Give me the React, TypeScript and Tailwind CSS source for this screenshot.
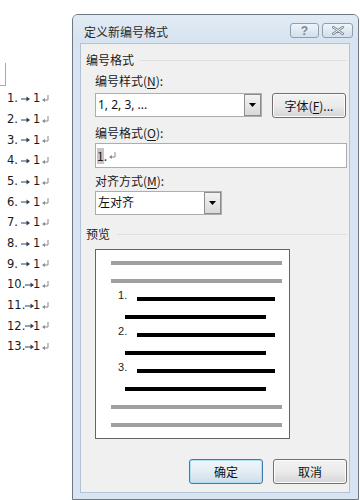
import React from 'react';

const cjk = "font-['Noto_Sans_CJK_SC','Noto_Sans',sans-serif]";

function DropArrow() {
  return (
    <div className="w-[17px] h-full border border-[#8d8d8d] bg-gradient-to-b from-[#f3f3f3] to-[#d9d9d9] flex items-center justify-center">
      <svg width="7" height="4" viewBox="0 0 7 4">
        <path d="M0 0 L7 0 L3.5 4 Z" fill="#000" />
      </svg>
    </div>
  );
}

function Combo({ width, text }: { width: string; text: string }) {
  return (
    <div className={`${width} h-[24px] bg-white border border-[#abadb3] flex items-stretch`}>
      <div className="flex-1 flex items-center pl-[2px] text-[12px] text-[#111] font-['Noto_Sans','Noto_Sans_CJK_SC',sans-serif]">{text}</div>
      <DropArrow />
    </div>
  );
}

function WinButton({ children, primary = false }: { children: React.ReactNode; primary?: boolean }) {
  return (
    <div
      className={`w-[74px] h-[25px] rounded-[3px] border flex items-center justify-center text-[12px] text-[#111] ${
        primary
          ? 'border-[#3d7bad] bg-gradient-to-b from-[#f1f6fa] via-[#e2edf5] to-[#cfdde9] shadow-[inset_0_0_0_1px_#aee0f6]'
          : 'border-[#707070] bg-gradient-to-b from-[#f2f2f2] via-[#ebebeb] to-[#d5d5d5] shadow-[inset_0_0_0_1px_#fcfcfc]'
      }`}
    >
      {children}
    </div>
  );
}

function ReturnMark() {
  return (
    <svg width="7" height="8" viewBox="0 0 7 8" className="ml-[2px]">
      <path d="M6 0 V5 H1.5" stroke="#8a8a8a" strokeWidth="1" fill="none" />
      <path d="M0 5 L3 3 L3 7 Z" fill="#8a8a8a" />
    </svg>
  );
}

function TabArrow() {
  return (
    <svg width="9" height="6" viewBox="0 0 9 6">
      <path d="M0 3 H7" stroke="#33415c" strokeWidth="1" />
      <path d="M9 3 L5.5 0.5 L5.5 5.5 Z" fill="#33415c" />
    </svg>
  );
}

function PreviewLine({ gray = false, left, width }: { gray?: boolean; left: string; width: string }) {
  return <div className={`h-[4px] ${left} ${width} ${gray ? 'bg-[#a0a0a0]' : 'bg-black'}`} />;
}

function NumberedLine({ n }: { n: number }) {
  return (
    <div className="h-[4px] flex items-end">
      <span className="ml-[22px] w-[19px] text-[11px] leading-[11px] text-[#222] font-['Liberation_Sans',sans-serif]">{n}.</span>
      <div className="h-[4px] w-[138px] bg-black" />
    </div>
  );
}

export default function App() {
  const rows = Array.from({ length: 13 }, (_, i) => i + 1);
  return (
    <div className={`w-[360px] h-[500px] bg-white flex overflow-hidden ${cjk}`}>
      {/* document behind the dialog */}
      <div className="w-[72px] shrink-0">
        <div className="mt-[63px] w-[6px] h-[23px] border-r border-b border-[#a9a9a9]" />
        <div className="mt-[2.5px] pl-[7px] font-['DejaVu_Sans',sans-serif] text-[11.5px] text-[#1a1a1a]">
          {rows.map((n) => (
            <div key={n} className="h-[20.7px] flex items-center">
              <div className="w-[26px] flex items-center">
                <span>{n}.</span>
                <span className="flex-1 flex justify-center">
                  <TabArrow />
                </span>
              </div>
              <span>1</span>
              <ReturnMark />
            </div>
          ))}
        </div>
      </div>

      {/* dialog */}
      <div className="pt-[14px]">
        <div className="w-[287px] h-[486px] border border-[#6e7784] rounded-t-[6px] bg-[#d8e4f1] flex flex-col">
          <div className="h-[28px] flex items-start pl-[11px] pr-[5px] bg-gradient-to-b from-[#e2ebf5] to-[#d6e3f0] rounded-t-[5px]">
            <span className="mt-[10px] leading-[14px] text-[12px] text-[#2a2a2a]">定义新编号格式</span>
            <div className="ml-auto mt-[8px] flex gap-[3px]">
              <div className="w-[29px] h-[15px] rounded-[3px] border border-[#8f9fb0] bg-gradient-to-b from-[#eff4f9] to-[#d3dfeb] flex items-center justify-center">
                <span className="text-[12px] leading-[12px] font-bold text-[#7a8795] font-['Liberation_Sans',sans-serif]">?</span>
              </div>
              <div className="w-[31px] h-[15px] rounded-[3px] border border-[#8f9fb0] bg-gradient-to-b from-[#eff4f9] to-[#d3dfeb] flex items-center justify-center">
                <svg width="12" height="9" viewBox="0 0 12 9">
                  <path d="M1 1 L11 8 M11 1 L1 8" stroke="#7a8795" strokeWidth="2.6" strokeLinecap="round" />
                  <path d="M1 1 L11 8 M11 1 L1 8" stroke="#eef2f6" strokeWidth="1" strokeLinecap="round" />
                </svg>
              </div>
            </div>
          </div>

          <div className="ml-[7px] w-[270px] flex-1 mb-[6px] bg-[#f0f0f0] border border-[#b3c3d5] flex flex-col text-[12px] text-[#1a1a1a]">
            <div className="mt-[9px] pl-[5px] pr-[2px] h-[14px] flex items-center gap-[6px]">
              <span className="leading-[14px]">编号格式</span>
              <div className="flex-1 border-t border-[#dcdfe3]" />
            </div>

            <div className="pl-[14px] flex flex-col">
              <div className="mt-[7px] h-[14px] leading-[14px]">
                编号样式(<span className="underline underline-offset-2">N</span>):
              </div>
              <div className="mt-[5px] flex gap-[10px]">
                <Combo width="w-[167px]" text="1, 2, 3, ..." />
                <WinButton>
                  字体(<span className="underline underline-offset-2">F</span>)...
                </WinButton>
              </div>

              <div className="mt-[8px] h-[14px] leading-[14px]">
                编号格式(<span className="underline underline-offset-2">O</span>):
              </div>
              <div className="mt-[3px] w-[252px] h-[25px] bg-white border border-[#abadb3] flex items-center pl-[1px]">
                <span className="bg-[#c6c6c6] leading-[16px]">1</span>
                <span>.</span>
                <ReturnMark />
              </div>

              <div className="mt-[6px] h-[14px] leading-[14px]">
                对齐方式(<span className="underline underline-offset-2">M</span>):
              </div>
              <div className="mt-[3px]">
                <Combo width="w-[127px]" text="左对齐" />
              </div>
            </div>

            <div className="mt-[12px] pl-[5px] pr-[2px] h-[14px] flex items-center gap-[7px]">
              <span className="leading-[14px]">预览</span>
              <div className="flex-1 border-t border-[#dcdfe3]" />
            </div>

            <div className="ml-[14px] mt-[8px] w-[195px] h-[190px] bg-white border border-[#646464] pt-[11px] flex flex-col gap-[14px]">
              <PreviewLine gray left="ml-[15px]" width="w-[171px]" />
              <PreviewLine gray left="ml-[15px]" width="w-[171px]" />
              <NumberedLine n={1} />
              <PreviewLine left="ml-[29px]" width="w-[141px]" />
              <NumberedLine n={2} />
              <PreviewLine left="ml-[29px]" width="w-[141px]" />
              <NumberedLine n={3} />
              <PreviewLine left="ml-[29px]" width="w-[141px]" />
              <PreviewLine gray left="ml-[15px]" width="w-[171px]" />
              <PreviewLine gray left="ml-[15px]" width="w-[171px]" />
            </div>

            <div className="mt-[20px] pr-[2px] flex justify-end gap-[10px]">
              <WinButton primary>确定</WinButton>
              <WinButton>取消</WinButton>
            </div>
          </div>
        </div>
      </div>
    </div>
  );
}
